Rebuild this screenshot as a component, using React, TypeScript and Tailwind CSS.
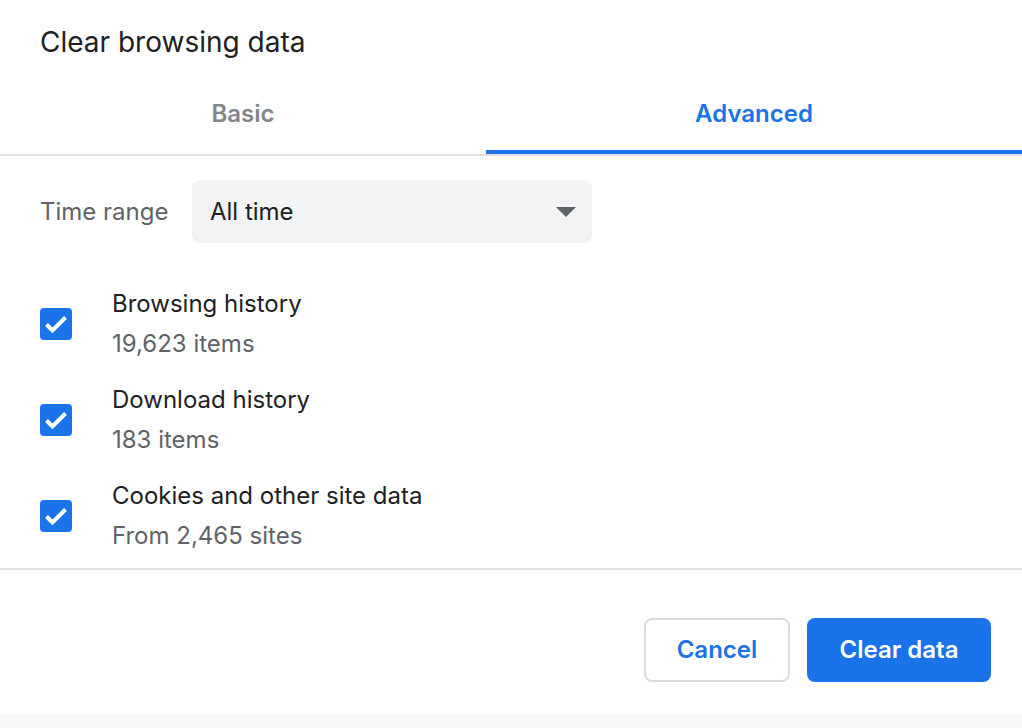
import { useState } from 'react';

type Item = { id: string; label: string; detail: string };

const items: Item[] = [
  { id: 'history', label: 'Browsing history', detail: '19,623 items' },
  { id: 'downloads', label: 'Download history', detail: '183 items' },
  { id: 'cookies', label: 'Cookies and other site data', detail: 'From 2,465 sites' },
];

function CheckBox({ checked, onToggle }: { checked: boolean; onToggle: () => void }) {
  return (
    <button
      onClick={onToggle}
      className={`w-8 h-8 rounded-[4px] flex items-center justify-center shrink-0 ${
        checked ? 'bg-[#1a73e8]' : 'border-2 border-[#5f6368] bg-white'
      }`}
    >
      {checked && (
        <svg width="32" height="32" viewBox="0 0 32 32" fill="none">
          <path d="M6.5 16.5l6 6L25.5 9.5" stroke="white" strokeWidth="4" />
        </svg>
      )}
    </button>
  );
}

export default function App() {
  const [tab, setTab] = useState<'basic' | 'advanced'>('advanced');
  const [checked, setChecked] = useState<Record<string, boolean>>({
    history: true,
    downloads: true,
    cookies: true,
  });

  return (
    <div className="w-full h-[728px] bg-white flex flex-col font-['Inter',sans-serif] overflow-hidden">
      {/* Title */}
      <h1 className="pl-10 pt-[28px] text-[28px] leading-[28px] text-[#202124] font-normal">
        Clear browsing data
      </h1>

      {/* Tabs */}
      <div className="mt-[24px] grid grid-cols-[486px_1fr] border-b-2 border-[#e0e0e0]">
        <button
          onClick={() => setTab('basic')}
          className={`h-[74px] pt-[22px] text-[24px] leading-[24px] font-semibold flex justify-center ${
            tab === 'basic' ? 'text-[#1a73e8] border-b-4 border-[#1a73e8]' : 'text-[#80868b]'
          }`}
        >
          Basic
        </button>
        <button
          onClick={() => setTab('advanced')}
          className={`h-[74px] pt-[22px] text-[24px] leading-[24px] font-semibold flex justify-center ${
            tab === 'advanced' ? 'text-[#1a73e8] border-b-4 border-[#1a73e8]' : 'text-[#80868b]'
          }`}
        >
          Advanced
        </button>
      </div>

      {/* Time range */}
      <div className="mt-[24px] pl-10 flex items-center">
        <span className="w-[152px] text-[24px] text-[#5f6368]">Time range</span>
        <div className="w-[400px] h-[63px] rounded-lg bg-[#f1f3f4] pl-[18px] pr-4 flex items-center justify-between">
          <span className="text-[24px] text-[#202124]">All time</span>
          <svg width="20" height="10" viewBox="0 0 20 10">
            <path d="M0 0h20L10 10z" fill="#5f6368" />
          </svg>
        </div>
      </div>

      {/* Data types */}
      <div className="mt-[41px] pl-10 flex flex-col gap-4">
        {items.map((item) => (
          <div key={item.id} className="flex items-center gap-10">
            <CheckBox
              checked={checked[item.id]}
              onToggle={() => setChecked((c) => ({ ...c, [item.id]: !c[item.id] }))}
            />
            <div className="text-[24px] leading-[40px]">
              <div className="text-[#202124]">{item.label}</div>
              <div className="text-[#5f6368]">{item.detail}</div>
            </div>
          </div>
        ))}
      </div>

      {/* Footer */}
      <div className="mt-3 border-t-2 border-[#e0e0e0] flex justify-end gap-[17px] pt-12 pb-8 pr-[31px]">
        <button className="w-[146px] h-[64px] rounded-lg border-2 border-[#dadce0] bg-white text-[#1a73e8] text-[24px] font-semibold">
          Cancel
        </button>
        <button className="w-[184px] h-[64px] rounded-lg bg-[#1a73e8] text-white text-[24px] font-semibold">
          Clear data
        </button>
      </div>

      <div className="flex-1 bg-[#f8f8f8]" />
    </div>
  );
}
